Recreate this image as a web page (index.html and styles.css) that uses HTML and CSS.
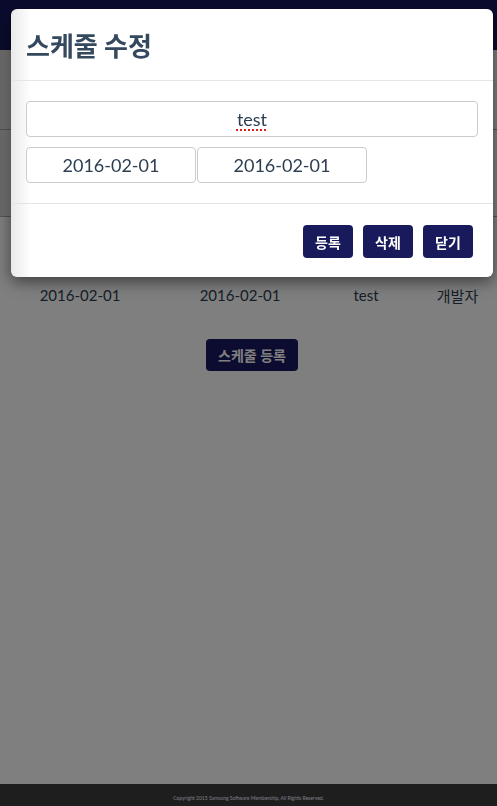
FILE: index.html
```html
<!DOCTYPE html>
<html lang="ko">
<head>
<meta charset="utf-8">
<title>스케줄</title>
<link rel="stylesheet" href="styles.css">
</head>
<body>
<div class="page">
  <header class="navbar"></header>
  <main class="content">
    <div class="page-head"></div>
    <div class="thead"></div>
    <div class="spacer-row"></div>
    <div class="data-row">
      <span>2016-02-01</span>
      <span>2016-02-01</span>
      <span>test</span>
      <span class="col-role">개발자</span>
    </div>
    <div class="actions">
      <button class="btn-main" type="button">스케줄 등록</button>
    </div>
  </main>
  <footer class="site-footer">Copyright 2015 Samsung Software Membership, All Rights Reserved.</footer>
</div>

<div class="backdrop"></div>

<div class="modal">
  <div class="modal-header">
    <h2 class="modal-title">스케줄 수정</h2>
  </div>
  <div class="modal-body">
    <div class="field field-title" contenteditable="true" spellcheck="false"><span class="spell">test</span></div>
    <div class="date-row">
      <input class="field field-date" type="text" value="2016-02-01">
      <input class="field field-date" type="text" value="2016-02-01">
    </div>
  </div>
  <div class="modal-footer">
    <button class="btn" type="button">등록</button>
    <button class="btn" type="button">삭제</button>
    <button class="btn" type="button">닫기</button>
  </div>
</div>
</body>
</html>
```
FILE: styles.css
```css
* { box-sizing: border-box; }
html, body { margin: 0; padding: 0; }
body {
  font-family: Lato, "Noto Sans CJK KR", sans-serif;
  color: #2c3e50;
  background: #fff;
}
.page {
  min-height: 100vh;
  display: flex;
  flex-direction: column;
}
.navbar {
  height: 50px;
  background: #17175c;
  flex: none;
}
.content { flex: 1; }
.page-head {
  height: 79px;
  background: linear-gradient(90deg, #d2d2d2 0, #ffffff 16px);
}
.thead {
  height: 88px;
  border-top: 1px solid #a8a8a8;
  border-bottom: 1px solid #a8a8a8;
  background: linear-gradient(90deg, #d2d2d2 0, #ffffff 16px);
}
.spacer-row {
  height: 59px;
}
.data-row {
  height: 38px;
  display: grid;
  grid-template-columns: 160px 160px 92px 1fr;
  align-items: center;
  font-size: 15px;
}
.data-row span { text-align: center; }
.data-row .col-role { padding-left: 6px; }
.actions {
  display: flex;
  justify-content: center;
  padding-left: 7px;
  margin-top: 25px;
}
.btn-main {
  width: 92px;
  height: 32px;
  border: 0;
  border-radius: 4px;
  background: #17185e;
  color: #fff;
  font-family: Lato, "Noto Sans CJK KR", sans-serif;
  font-size: 14px;
  font-weight: 700;
}
.site-footer {
  flex: none;
  height: 22px;
  background: #3c3c3c;
  color: #f0f0ff;
  font-size: 5px;
  text-align: center;
  line-height: 29px;
}
.backdrop {
  position: fixed;
  inset: 0;
  background: rgba(0, 0, 0, 0.5);
}
.modal {
  position: absolute;
  left: 11px;
  top: 9px;
  width: 482px;
  background: linear-gradient(90deg, #e9e9e9 0, #ffffff 20px);
  border-radius: 6px;
  box-shadow: 0 5px 15px rgba(0, 0, 0, 0.5);
}
.modal-header {
  height: 72px;
  padding: 0 15px;
  display: flex;
  align-items: center;
  border-bottom: 1px solid #e5e5e5;
}
.modal-title {
  margin: 0;
  font-size: 26px;
  font-weight: 700;
  color: #34495e;
}
.modal-body {
  padding: 20px 15px 20px;
  border-bottom: 1px solid #e5e5e5;
}
.field {
  height: 36px;
  border: 1px solid #cccccc;
  border-radius: 4px;
  background: #fff;
  font-family: Lato, "Noto Sans CJK KR", sans-serif;
  font-size: 18px;
  color: #2c3e50;
  text-align: center;
  padding: 0 10px;
  outline: none;
}
.field-title {
  display: block;
  width: 452px;
  line-height: 34px;
}
.spell {
  text-decoration: underline dotted #e0201c;
  text-decoration-thickness: 2px;
  text-underline-offset: 3px;
}
.date-row {
  display: flex;
  gap: 1px;
  margin-top: 10px;
}
.field-date { width: 170px; }
.modal-footer {
  display: flex;
  justify-content: flex-end;
  gap: 10px;
  padding: 21px 20px 19px;
}
.btn {
  width: 50px;
  height: 33px;
  border: 0;
  border-radius: 4px;
  background: #191a5c;
  color: #fff;
  font-family: Lato, "Noto Sans CJK KR", sans-serif;
  font-size: 14px;
  font-weight: 700;
}
```
